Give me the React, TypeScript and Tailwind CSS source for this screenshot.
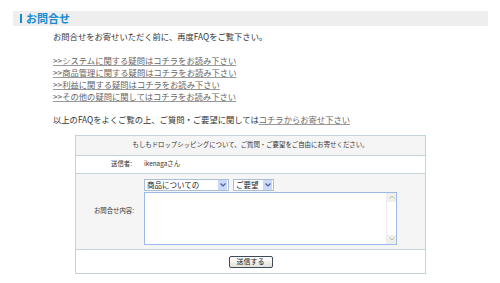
import React from "react";

const jp = { fontFamily: '"Noto Sans CJK JP", "Noto Sans", sans-serif' };

function FakeSelect({ label, width }: { label: string; width: string }) {
  return (
    <div className={`${width} h-[12px] flex items-center border border-[#a9bfd6] bg-white`}>
      <span className="flex-1 min-w-0 pl-[2px] text-[7.5px] leading-none text-[#222] whitespace-nowrap">{label}</span>
      <span className="w-[9px] h-[10px] mr-[1px] shrink-0 flex items-center justify-center bg-[#c9d8fb]">
        <svg width="6" height="4" viewBox="0 0 6 4">
          <path d="M0.5 0.5 L3 3 L5.5 0.5" fill="none" stroke="#4d6185" strokeWidth="1.2" />
        </svg>
      </span>
    </div>
  );
}

export default function App() {
  const links = [
    ">>システムに関する疑問はコチラをお読み下さい",
    ">>商品管理に関する疑問はコチラをお読み下さい",
    ">>利益に関する疑問はコチラをお読み下さい",
    ">>その他の疑問に関してはコチラをお読み下さい",
  ];

  return (
    <div className="w-[500px] h-[283px] bg-white overflow-hidden text-[#333]" style={jp}>
      {/* Title bar */}
      <div className="ml-[13px] mt-[11px] w-[475px] h-[15px] bg-[#eeeeee] flex items-center pl-[7px]">
        <span className="w-[2px] h-[9px] bg-[#1a8ad0] mr-[4px]" />
        <span className="text-[11px] font-bold leading-none text-[#1a8ad0]">お問合せ</span>
      </div>

      <div className="pl-[53px] text-[8.3px] leading-[9px]">
        <p className="mt-[6px]">お問合せをお寄せいただく前に、再度FAQをご覧下さい。</p>

        <ul className="mt-[15px] flex flex-col gap-[3px]">
          {links.map(l => (
            <li key={l}>
              <a className="underline text-[#666] decoration-[#999]">{l}</a>
            </li>
          ))}
        </ul>

        <p className="mt-[14px]">
          以上のFAQをよくご覧の上、ご質問・ご要望に関しては
          <a className="underline text-[#666] decoration-[#999]">コチラからお寄せ下さい</a>
        </p>
      </div>

      {/* Form table */}
      <div className="ml-[75px] mt-[11px] w-[351px] border border-[#c3d3da] text-[6.4px] leading-none text-[#333]">
        <div className="h-[20px] flex items-center justify-center bg-[#f5f5f5] border-b border-[#c3d3da]">
          もしもドロップシッピングについて、ご質問・ご要望をご自由にお寄せください。
        </div>
        <div className="h-[18px] flex items-center border-b border-[#c3d3da]">
          <span className="w-[58px] text-right pr-[2px]">送信者:</span>
          <span className="ml-[10px]">ikenagaさん</span>
        </div>
        <div className="h-[76px] flex items-center bg-[#f5f5f5] border-b border-[#c3d3da]">
          <span className="w-[58px] text-right">お問合せ内容:</span>
          <div className="ml-[10px] flex flex-col gap-[1px]">
            <div className="flex gap-[4px]">
              <FakeSelect label="商品についての" width="w-[85px]" />
              <FakeSelect label="ご要望" width="w-[41px]" />
            </div>
            <div className="w-[253px] h-[53px] border border-[#9cb9ec] bg-white flex justify-end">
              <div className="w-[10px] h-full flex flex-col justify-between bg-white border-l border-[#eeeeee]">
                <span className="h-[9px] flex items-center justify-center bg-[#f0f0ea]">
                  <svg width="6" height="4" viewBox="0 0 6 4">
                    <path d="M0.5 3.5 L3 1 L5.5 3.5" fill="none" stroke="#b8b8b0" strokeWidth="1" />
                  </svg>
                </span>
                <span className="h-[9px] flex items-center justify-center bg-[#f0f0ea]">
                  <svg width="6" height="4" viewBox="0 0 6 4">
                    <path d="M0.5 0.5 L3 3 L5.5 0.5" fill="none" stroke="#b8b8b0" strokeWidth="1" />
                  </svg>
                </span>
              </div>
            </div>
          </div>
        </div>
        <div className="h-[23px] flex items-center justify-center">
          <button className="w-[44px] h-[12px] flex items-center justify-center rounded-[2px] border border-[#3c4a5c] bg-gradient-to-b from-white to-[#e2e2da] text-[7px] text-[#222]">
            送信する
          </button>
        </div>
      </div>
    </div>
  );
}
